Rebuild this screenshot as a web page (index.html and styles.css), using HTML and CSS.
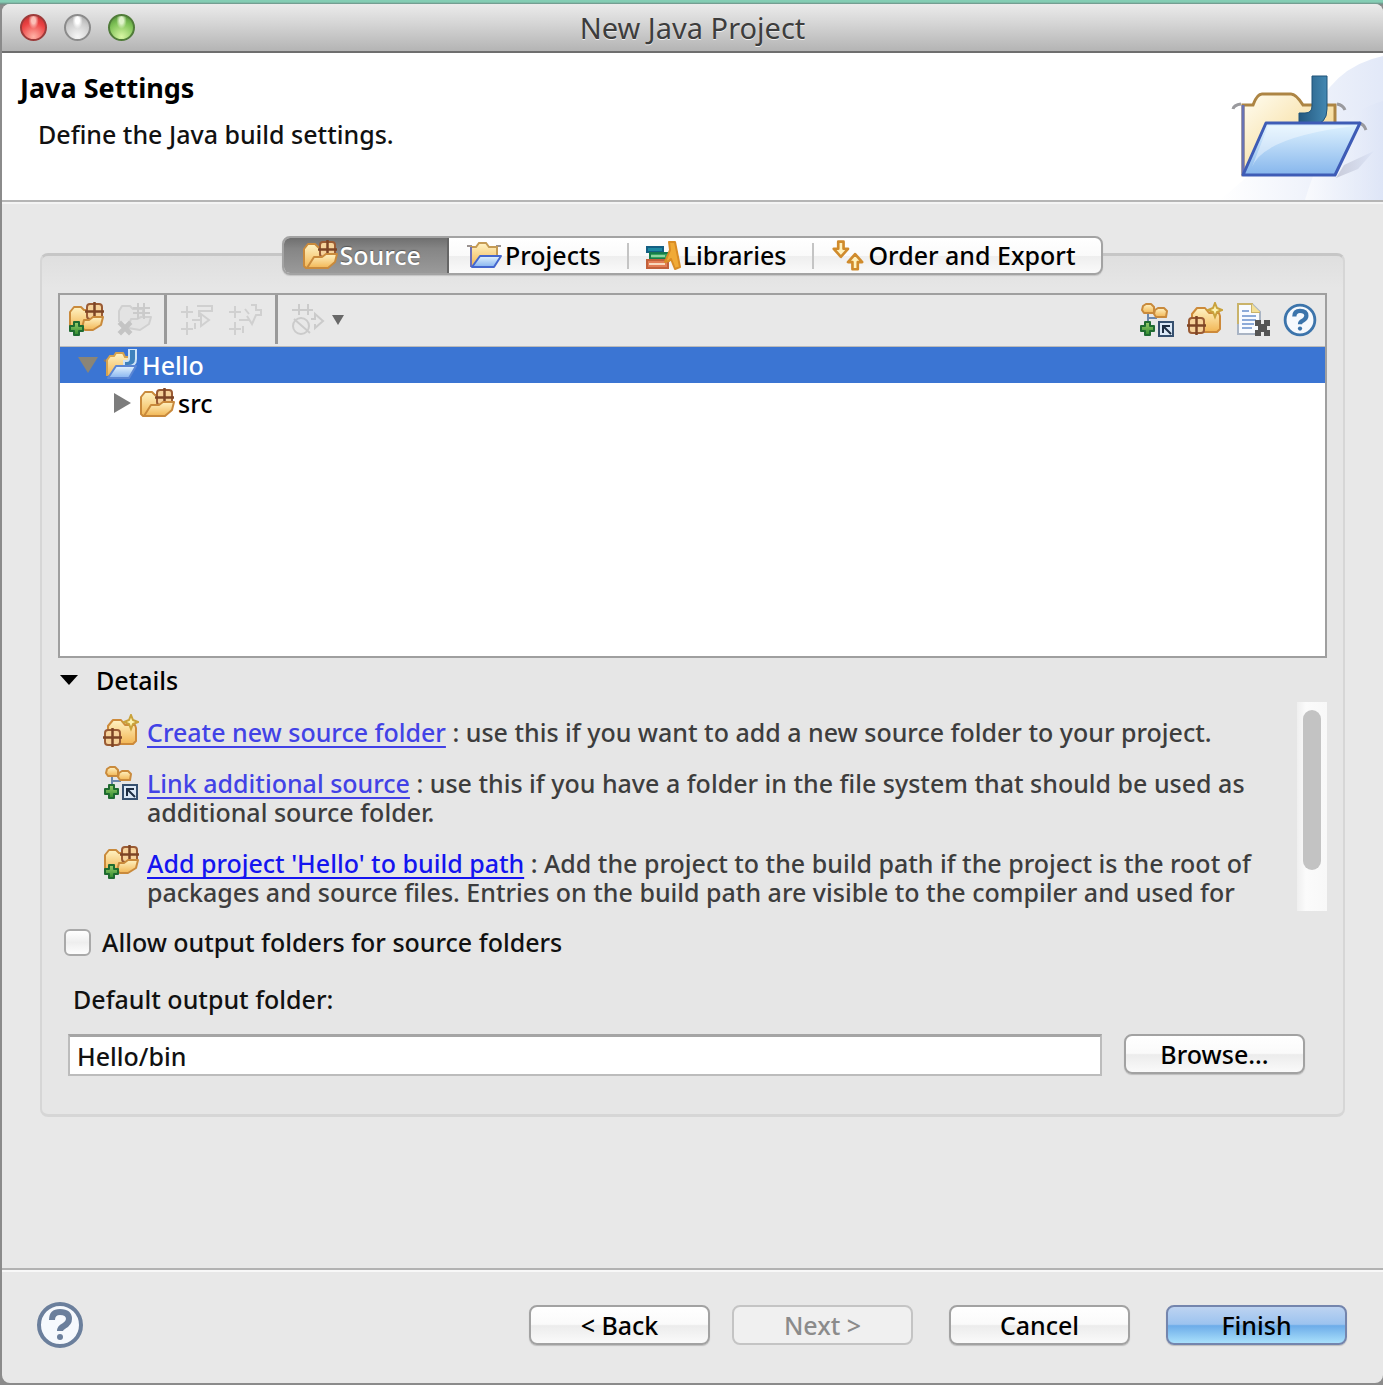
FILE: index.html
```html
<!DOCTYPE html>
<html lang="en">
<head>
<meta charset="utf-8">
<meta name="viewport" content="width=device-width, initial-scale=1">
<title>New Java Project</title>
<link rel="stylesheet" href="styles.css">
</head>
<body>
<svg class="sprite" aria-hidden="true">
  <defs>
    <linearGradient id="gold" x1="0" y1="0" x2="0" y2="1"><stop offset="0" stop-color="#fff3c4"/><stop offset="1" stop-color="#f2b654"/></linearGradient>
    <linearGradient id="blue" x1="0" y1="0" x2="0" y2="1"><stop offset="0" stop-color="#e3f3fd"/><stop offset="1" stop-color="#86b4f0"/></linearGradient>
    <linearGradient id="green" x1="0" y1="0" x2="0" y2="1"><stop offset="0" stop-color="#9ad06e"/><stop offset="1" stop-color="#2f8a2c"/></linearGradient>
    <g id="grid">
      <rect x="2" y="2" width="15" height="15" rx="3" fill="#f6d29a" stroke="#9a5b34" stroke-width="2"/>
      <path d="M9.500 0v19M0 9.500h19" fill="none" stroke="#7d4526" stroke-width="2.500"/>
    </g>
    <path id="plus" d="M5 1h5v4h4v5h-4v4H5v-4H1V5h4z" fill="url(#green)" stroke="#1f6b31" stroke-width="2" stroke-linejoin="round"/>
    <path id="star" d="M7 0l2 5 5 2-5 2-2 5-2-5-5-2 5-2z" fill="#fdf3b0" stroke="#c9a23c" stroke-width="2"/>
    <path id="cross" d="M1 3l2-2 4 4 4-4 2 2-4 4 4 4-2 2-4-4-4 4-2-2 4-4z" stroke-width="2"/>
  </defs>
  <symbol id="package-folder" viewBox="0 0 36 32">
    <path d="M2 27V10l4-5h7l3 3h12v12L8 29H4z" fill="url(#gold)" stroke="#c98a3c" stroke-width="2" stroke-linejoin="round"/>
    <use href="#grid" x="16" y="1"/>
    <path d="M5 29l7-11h8l4-3h11l-2 8-7 6z" fill="url(#gold)" stroke="#c98a3c" stroke-width="2" stroke-linejoin="round"/>
  </symbol>
  <symbol id="add-package" viewBox="0 0 36 36">
    <path d="M2 26V10l4-5h7l3 3h12v10L12 26z" fill="url(#gold)" stroke="#c98a3c" stroke-width="2" stroke-linejoin="round"/>
    <use href="#grid" x="17" y="0"/>
    <path d="M14 26l2-8h5l4-3h10l-2 8-8 5h-8z" fill="url(#gold)" stroke="#c98a3c" stroke-width="2" stroke-linejoin="round"/>
    <use href="#plus" x="1" y="19"/>
  </symbol>
  <symbol id="remove-package" viewBox="0 0 36 36">
    <g fill="#e3e3e3" stroke="#d0d0d0" stroke-width="2" stroke-linejoin="round">
      <path d="M3 20V9l3-5h8l3 3h10v11"/>
      <path d="M12 26l3-9h6l4-2h10l-2 7-9 6z"/>
      <path d="M22 1v16M28 1v16M17 6h17M17 11h17" stroke="#cbcbcb"/>
    </g>
    <use href="#cross" x="2" y="19" fill="#c4c4c4" stroke="#c4c4c4"/>
  </symbol>
  <symbol id="exclude" viewBox="0 0 36 36">
    <g fill="none" stroke="#d0d0d0" stroke-width="2">
      <path d="M8 4v12M2 10h12M8 20v13M2 27h12M18 4h15v5H20v6M13 18h10M22 12l8 6-8 6zM16 27v-6"/>
    </g>
  </symbol>
  <symbol id="include" viewBox="0 0 36 36">
    <g fill="none" stroke="#d0d0d0" stroke-width="2">
      <path d="M8 4v12M2 10h12M8 20v13M2 27h12M24 3h5v5h5v5h-5l-4 9-5-8M12 18h10M16 24v7M18 7l4 5"/>
    </g>
  </symbol>
  <symbol id="configure" viewBox="0 0 36 36">
    <g fill="none" stroke="#cbcbcb" stroke-width="2">
      <path d="M9 2v11M2 8h21M18 2v11M21 17h4v-5l8 7-8 7v-4M4 17l16 14"/>
      <ellipse cx="11" cy="24" rx="8" ry="8"/>
    </g>
  </symbol>
  <symbol id="java-project" viewBox="0 0 36 32">
    <path d="M1 11l4 2v14" fill="none" stroke="#8a7a70" stroke-width="2"/>
    <path d="M4 27V11l3-4h4l2-3h7l2 4h7v9" fill="url(#gold)" stroke="#d5a24e" stroke-width="2"/>
    <path d="M26 0h7v10q0 7-8 7h-4v-5h3q2 0 2-3z" fill="#3f82bd" stroke="#cfe4f6" stroke-width="2"/>
    <path d="M5 29l8-12h20l-7 12z" fill="url(#blue)" stroke="#5b86d4" stroke-width="2" stroke-linejoin="round"/>
  </symbol>
  <symbol id="open-folder" viewBox="0 0 36 32">
    <path d="M0 7h5M29 7h5M9 16H6" stroke="#9a9290" stroke-width="2"/>
    <path d="M4 27V8h5l3-4h7l3 4h8v10" fill="url(#gold)" stroke="#c59b55" stroke-width="2"/>
    <path d="M4 8v20" stroke="#6f70b8" stroke-width="2"/>
    <path d="M5 28l8-11h21l-7 11z" fill="url(#blue)" stroke="#4467cf" stroke-width="2" stroke-linejoin="round"/>
  </symbol>
  <symbol id="books" viewBox="0 0 36 32">
    <path d="M2 8h16v5H2z" fill="#1d8aa3" stroke="#145f83" stroke-width="2"/>
    <path d="M5 14h18v6H5z" fill="#36a45c" stroke="#167a4c" stroke-width="2"/>
    <path d="M6 17h14" stroke="#8fd3a0" stroke-width="2"/>
    <path d="M2 21h21v8H2z" fill="#e27d55" stroke="#c2603a" stroke-width="2"/>
    <path d="M4 25h16" stroke="#f8d8bd" stroke-width="2"/>
    <path d="M24 3h6l5 25-5 2-4-10-2 2-4 1 5-12z" fill="#f0aa36" stroke="#d98c24" stroke-width="2" stroke-linejoin="round"/>
  </symbol>
  <symbol id="order" viewBox="0 0 36 36">
    <g fill="#fff1bd" stroke="#d08b2c" stroke-width="3" stroke-linejoin="round">
      <path d="M7 3h6v8h5l-8 9-8-9h5z"/>
      <path d="M23 34h6v-8h5l-8-9-8 9h5z"/>
    </g>
  </symbol>
  <symbol id="link-source" viewBox="0 0 36 36">
    <path d="M9 12v10M10 16h8" stroke="#6c88ad" stroke-width="2" fill="none"/>
    <path d="M4 4l3-2h5l3 3v6H5L3 8z" fill="url(#gold)" stroke="#c98a3c" stroke-width="2" stroke-linejoin="round"/>
    <path d="M16 8l3-2h6l3 3-1 6H17l-2-3z" fill="url(#gold)" stroke="#c98a3c" stroke-width="2" stroke-linejoin="round"/>
    <use href="#plus" x="1" y="19"/>
    <path d="M20 20h14v14H20z" fill="#dce9f7" stroke="#36506f" stroke-width="2"/>
    <path d="M24 31v-7h7M24 24l8 8" fill="none" stroke="#1d2d42" stroke-width="2"/>
  </symbol>
  <symbol id="new-source" viewBox="0 0 36 36">
    <path d="M5 27V12l5-6h8l4 5h10l1 3v13l-3 3H12z" fill="url(#gold)" stroke="#cd8a3a" stroke-width="2" stroke-linejoin="round"/>
    <use href="#grid" x="0" y="14"/>
    <use href="#star" x="21" y="1"/>
  </symbol>
  <symbol id="remove-doc" viewBox="0 0 36 36">
    <path d="M3 2h14l8 8v22H3z" fill="#f8fbff" stroke="#a9b4c4" stroke-width="2"/>
    <path d="M3 22V2h14v8h8" fill="none" stroke="#c9b36a" stroke-width="2"/>
    <path d="M17 2v8h8z" fill="#f3df96"/>
    <path d="M7 9h7M7 14h14M7 18h14M7 22h12M7 26h10" stroke="#8caad8" stroke-width="2"/>
    <g fill="#555"><path d="M20 18h6v6h-6zM29 18h6v6h-6zM20 28h6v6h-6zM29 28h6v6h-6zM23 22h9v8h-9z"/></g>
  </symbol>
  <symbol id="help" viewBox="0 0 48 48">
    <circle cx="24" cy="24" r="21" fill="#f6f9fd" stroke="currentColor" stroke-width="4"/>
    <path d="M16 19q0-8 8-8 9 0 9 7 0 4-5 7-4 2-4 5" fill="none" stroke="currentColor" stroke-width="6"/>
    <circle cx="24" cy="36" r="3" fill="currentColor"/>
  </symbol>
</svg>

<div class="window">
  <header class="titlebar">
    <div class="lights">
      <button class="light light-close" aria-label="Close"></button>
      <button class="light light-min" aria-label="Minimize"></button>
      <button class="light light-zoom" aria-label="Zoom"></button>
    </div>
    <div class="window-title">New Java Project</div>
  </header>

  <section class="banner">
    <div class="banner-text">
      <h1>Java Settings</h1>
      <p>Define the Java build settings.</p>
    </div>
    <svg class="banner-art" viewBox="0 0 203 147" aria-hidden="true">
      <defs>
        <linearGradient id="wash" x1="0" y1="0" x2="1" y2="0"><stop offset="0" stop-color="#fff"/><stop offset="1" stop-color="#dbe3f6"/></linearGradient>
        <linearGradient id="manila" x1="0" y1="0" x2="1" y2="1"><stop offset="0" stop-color="#fffdf2"/><stop offset="1" stop-color="#f3cd75"/></linearGradient>
        <linearGradient id="sheet" x1="0" y1="0" x2="0" y2="1"><stop offset="0" stop-color="#e0f3ff"/><stop offset="1" stop-color="#86b6ec"/></linearGradient>
        <linearGradient id="letter" x1="0" y1="0" x2="1" y2="0"><stop offset="0" stop-color="#24587f"/><stop offset="1" stop-color="#4388b2"/></linearGradient>
        <linearGradient id="shade" x1="0" y1="0" x2="1" y2="0"><stop offset="0" stop-color="#b9bccd"/><stop offset="1" stop-color="#dbe3f6"/></linearGradient>
      </defs>
      <path d="M203 3Q150 14 130 70L40 147H203z" fill="url(#wash)" opacity=".8"/>
      <path d="M203 48Q150 62 125 147H203z" fill="url(#wash)" opacity=".6"/>
      <path d="M164 112l30-14-16 18-22 9z" fill="url(#shade)" opacity=".7"/>
      <path d="M53 56q1-4 8-5M157 51q6 1 8 6M75 76q2-3 8-3M179 70q5 1 7 7" fill="none" stroke="#9a9a9e" stroke-width="3"/>
      <path d="M63 121V52h10q4-11 9-11h29q5 0 12 11h32v25z" fill="url(#manila)" stroke="#ad8544" stroke-width="3"/>
      <path d="M63 52v70" stroke="#6872b4" stroke-width="3"/>
      <path d="M132 23h15v33q0 16-16 16h-12V60h6q7 0 7-7z" fill="url(#letter)" stroke="#1f5278" stroke-width="1"/>
      <path d="M63 122L86 70h94l-25 52z" fill="url(#sheet)" stroke="#3e5cb6" stroke-width="3" stroke-linejoin="round"/>
      <path d="M72 114Q84 84 174 73H88z" fill="#fff" opacity=".4"/>
    </svg>
  </section>

  <main class="content">
    <div class="group">
      <div class="tabs" role="tablist">
        <button class="tab tab-active" role="tab" aria-selected="true"><svg class="tab-icon"><use href="#package-folder"/></svg>Source</button>
        <button class="tab" role="tab" aria-selected="false"><svg class="tab-icon"><use href="#open-folder"/></svg>Projects</button>
        <button class="tab" role="tab" aria-selected="false"><svg class="tab-icon"><use href="#books"/></svg>Libraries</button>
        <button class="tab" role="tab" aria-selected="false"><svg class="tab-icon"><use href="#order"/></svg>Order and Export</button>
      </div>

      <div class="tree-panel">
        <div class="toolbar" role="toolbar" aria-label="Build path">
          <div class="tool-group">
            <button class="tool" aria-label="Add project to build path"><svg><use href="#add-package"/></svg></button>
            <button class="tool" aria-label="Remove from build path" disabled><svg><use href="#remove-package"/></svg></button>
          </div>
          <div class="tool-group">
            <button class="tool" aria-label="Exclude" disabled><svg><use href="#exclude"/></svg></button>
            <button class="tool" aria-label="Include" disabled><svg><use href="#include"/></svg></button>
          </div>
          <div class="tool-group">
            <button class="tool" aria-label="Configure filters" disabled><svg><use href="#configure"/></svg></button>
            <button class="tool-more" aria-label="More filters"></button>
          </div>
          <div class="tool-group tool-group-end">
            <button class="tool" aria-label="Link additional source"><svg><use href="#link-source"/></svg></button>
            <button class="tool" aria-label="Create new source folder"><svg><use href="#new-source"/></svg></button>
            <button class="tool" aria-label="Revert"><svg><use href="#remove-doc"/></svg></button>
            <button class="tool tool-help" aria-label="Help"><svg><use href="#help"/></svg></button>
          </div>
        </div>
        <ul class="tree" role="tree">
          <li class="row row-selected" role="treeitem" aria-expanded="true"><span class="arrow arrow-open"></span><svg class="row-icon"><use href="#java-project"/></svg>Hello</li>
          <li class="row row-child" role="treeitem"><span class="arrow arrow-closed"></span><svg class="row-icon"><use href="#package-folder"/></svg>src</li>
        </ul>
      </div>

      <button class="details-toggle" aria-expanded="true"><span class="details-arrow"></span>Details</button>

      <div class="details">
        <ul class="hints">
          <li class="hint"><svg class="hint-icon"><use href="#new-source"/></svg><p><a href="#create">Create new source folder</a> : use this if you want to add a new source folder to your project.</p></li>
          <li class="hint"><svg class="hint-icon"><use href="#link-source"/></svg><p><a href="#link">Link additional source</a> : use this if you have a folder in the file system that should be used as additional source folder.</p></li>
          <li class="hint"><svg class="hint-icon"><use href="#add-package"/></svg><p><a class="link-strong" href="#add">Add project 'Hello' to build path</a> : Add the project to the build path if the project is the root of packages and source files. Entries on the build path are visible to the compiler and used for</p></li>
        </ul>
        <div class="scroll-track"><div class="scroll-thumb"></div></div>
      </div>

      <label class="check"><input type="checkbox">Allow output folders for source folders</label>

      <div class="output">
        <label for="output">Default output folder:</label>
        <div class="output-row">
          <input id="output" type="text" value="Hello/bin">
          <button class="btn">Browse...</button>
        </div>
      </div>
    </div>
  </main>

  <footer class="footer">
    <button class="help" aria-label="Help"><svg><use href="#help"/></svg></button>
    <div class="step-buttons">
      <button class="btn">&lt; Back</button>
      <button class="btn" disabled>Next &gt;</button>
    </div>
    <button class="btn">Cancel</button>
    <button class="btn btn-primary">Finish</button>
  </footer>
</div>
</body>
</html>
```
FILE: styles.css
```css
* { box-sizing: border-box; }

body {
  margin: 0;
  min-height: 100vh;
  display: flex;
  flex-direction: column;
  padding: 4px 0 2px 2px;
  background: linear-gradient(#84cdb4 0 2px, #6f8f86 4px, #8b8b8b 5px);
  color: #111;
  font: 500 25px/30px "Noto Sans", "Open Sans", sans-serif;
}

h1, p, ul { margin: 0; padding: 0; }
ul { list-style: none; }
svg { display: block; flex: none; }
button, input { font: inherit; color: inherit; margin: 0; }
button { padding: 0; border: 0; background: none; }

.sprite { position: absolute; width: 0; height: 0; }

.window {
  flex: 1;
  display: flex;
  flex-direction: column;
  background: #e8e8e8;
  border-radius: 8px;
  overflow: hidden;
}

.titlebar {
  display: grid;
  grid-template-columns: 1fr auto 1fr;
  align-items: center;
  height: 49px;
  padding: 0 18px;
  background: linear-gradient(#ebebeb, #d6d6d6 40%, #b4b4b4);
  border-bottom: 2px solid #6e6e6e;
}
.lights { display: flex; gap: 17px; }
.light {
  width: 27px;
  height: 27px;
  border: 2px solid #777;
  border-radius: 50%;
}
.light-close { border-color: #9c3b3a; background: radial-gradient(ellipse at 50% 20%, #fbc0b8 0 12%, transparent 32%), radial-gradient(circle at 50% 90%, #ffb3a6, #ec4243 60%, #b82a2c); }
.light-min { border-color: #8b8b8b; background: radial-gradient(ellipse at 50% 20%, #fff 0 12%, transparent 32%), radial-gradient(circle at 50% 90%, #f6f6f6, #cdcdcd 60%, #a4a4a4); }
.light-zoom { border-color: #507c39; background: radial-gradient(ellipse at 50% 20%, #e0f3cb 0 12%, transparent 32%), radial-gradient(circle at 50% 90%, #d8f7a4, #7fc257 60%, #47862f); }
.window-title { font-size: 29px; font-weight: 400; color: #3d3d3d; text-shadow: 0 1px 0 #eee; }

.banner {
  display: flex;
  justify-content: space-between;
  background: #fff;
  border-bottom: 2px solid #b5b5b5;
  box-shadow: 0 2px 0 #f4f4f4;
}
.banner-text { padding: 19px 18px 0; }
.banner h1 { font-size: 27px; line-height: 32px; font-weight: 700; color: #000; }
.banner p { padding: 15px 18px 0; }
.banner-art { width: 203px; height: 147px; }

.content { flex: 1; padding: 51px 38px 0; }
.group {
  display: flex;
  flex-direction: column;
  padding: 0 16px 38px;
  border: 3px solid #d6d6d6;
  border-top-color: #c6c6c6;
  border-width: 3px 2px;
  border-radius: 8px;
  background: linear-gradient(#dfdfdf, #e6e6e6 32px);
}

.tabs {
  align-self: center;
  display: flex;
  height: 39px;
  margin: -20px 0 18px;
  border: 2px solid #a3a3a3;
  border-radius: 8px;
  background: linear-gradient(#fff, #fafafa 50%, #eee 52%, #fafafa);
  box-shadow: 0 1px 1px #c4c4c4;
  overflow: hidden;
}
.tab {
  display: flex;
  align-items: center;
  gap: 2px;
  padding: 0 26px 2px 18px;
  color: #000;
}
.tab + .tab + .tab {
  background: linear-gradient(#c4c4c4, #c4c4c4) 0 50% / 2px 26px no-repeat;
}
.tab-active {
  background: linear-gradient(#6f6f6f, #858585 30%, #9a9a9a);
  border-right: 2px solid #666;
  color: #fff;
  text-shadow: 0 -1px 1px #555;
}
.tab-icon { width: 36px; height: 32px; }

.tree-panel {
  border: 2px solid #9f9f9f;
  background: #fff;
  min-height: 365px;
}
.toolbar { display: flex; height: 52px; background: #e8e8e8; border-bottom: 1px solid #bbb; }
.tool-group { display: flex; align-items: center; gap: 12px; height: 49px; padding: 0 12px 0 8px; }
.tool-group + .tool-group { border-left: 3px solid #999; padding-left: 12px; }
.toolbar .tool-group-end { margin-left: auto; border: 0; padding: 0 8px 0 0; }
.tool svg { width: 36px; height: 36px; }
.tool-help { color: #3c74ab; }
.tool-help svg { width: 34px; }
.tool-more {
  width: 0;
  border: 6px solid transparent;
  border-top: 10px solid #686868;
  border-bottom: 0;
  margin-left: -6px;
}
.row { display: flex; align-items: center; gap: 3px; height: 36px; padding-left: 18px; color: #000; }
.row-selected { background: #3b75d3; color: #fff; }
.row-child { padding-left: 54px; height: 40px; }
.row-icon { width: 36px; height: 32px; }
.arrow { width: 20px; margin-right: 2px; }
.arrow-open { border: 10px solid transparent; border-top: 16px solid #8a8577; border-bottom: 0; }
.arrow-closed { width: 17px; margin-right: 5px; border: 10px solid transparent; border-left: 17px solid #7c7c7c; border-right: 0; }

.details-toggle { display: flex; align-items: center; gap: 18px; padding: 7px 2px; text-align: left; color: #000; }
.details-arrow { border: 9px solid transparent; border-top: 10px solid #000; border-bottom: 0; }

.details { display: flex; height: 209px; overflow: hidden; }
.hints { flex: 1; display: flex; flex-direction: column; gap: 22px; padding: 16px 28px 0 45px; color: #3d3d3d; line-height: 29px; }
.hint { display: flex; align-items: flex-start; gap: 8px; }
.hint-icon { width: 36px; height: 36px; margin: -4px 0; }
.hint a { color: #4242e6; text-decoration-thickness: 2px; text-underline-offset: 4px; text-decoration-skip-ink: none; }
.hint .link-strong { color: #1414f0; }
.scroll-track { width: 30px; padding: 8px 6px; background: linear-gradient(90deg, #efefef, #fbfbfb 30%, #f8f8f8); }
.scroll-thumb { height: 160px; border-radius: 9px; background: #c3c3c3; }

.check { display: flex; align-items: center; gap: 11px; margin-top: 16px; padding-left: 6px; }
.check input {
  appearance: none;
  width: 27px;
  height: 27px;
  border: 2px solid #a9a9a9;
  border-radius: 6px;
  background: linear-gradient(#fff, #eee 50%, #fdfdfd);
}

.output { padding: 27px 22px 0 10px; }
.output label { display: block; padding-left: 5px; }
.output-row { display: flex; gap: 22px; margin-top: 20px; }
.output input {
  flex: 1;
  min-width: 0;
  height: 42px;
  padding: 0 7px;
  border: 2px solid #bcbcbc;
  border-top: 3px solid #a5a5a5;
  background: #fff;
}

.btn {
  width: 181px;
  height: 40px;
  border: 2px solid #a2a2a2;
  border-radius: 8px;
  background: linear-gradient(#fff, #fafafa 48%, #ececec 52%, #fafafa);
  box-shadow: 0 1px 1px #bdbdbd;
  color: #000;
}
.btn:disabled { border-color: #c4c4c4; background: #f0f0f0; box-shadow: none; color: #8b8b8b; }
.btn-primary { border-color: #7485ad; background: linear-gradient(#bdd3f1, #9cc3ef 48%, #6dace9 52%, #a9e0fb); }

.footer {
  display: flex;
  align-items: center;
  gap: 36px;
  padding: 31px 36px 34px 34px;
  border-top: 2px solid #b2b2b2;
  box-shadow: inset 0 2px 0 #f8f8f8;
}
.help { margin-right: auto; color: #6b7f9c; }
.help svg { width: 48px; height: 48px; }
.step-buttons { display: flex; gap: 22px; }
```
